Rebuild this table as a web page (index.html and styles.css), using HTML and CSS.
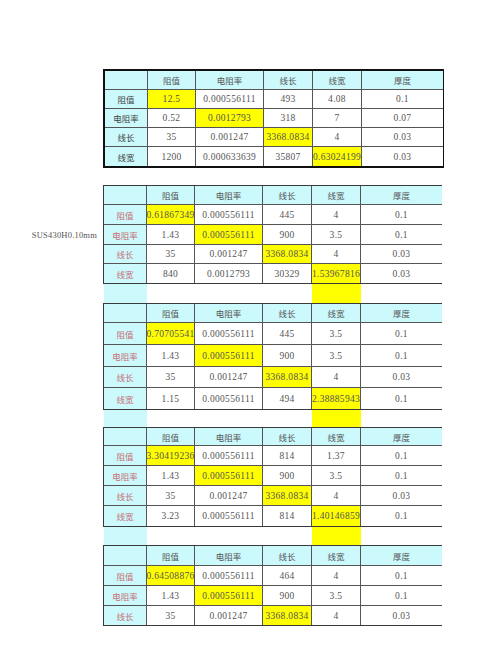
FILE: index.html
```html
<!DOCTYPE html>
<html>
<head>
<meta charset="utf-8">
<link rel="stylesheet" href="styles.css">
</head>
<body>
<div class="page">

  <section class="block b1">
    <div class="side"></div>
    <div class="stack">
      <div class="sheet thick">
        <div class="c hd"></div><div class="c hd">阻值</div><div class="c hd">电阻率</div><div class="c hd">线长</div><div class="c hd">线宽</div><div class="c hd">厚度</div>
        <div class="c hd rl">阻值</div><div class="c y">12.5</div><div class="c">0.000556111</div><div class="c">493</div><div class="c">4.08</div><div class="c">0.1</div>
        <div class="c hd rl">电阻率</div><div class="c">0.52</div><div class="c y">0.0012793</div><div class="c">318</div><div class="c">7</div><div class="c">0.07</div>
        <div class="c hd rl">线长</div><div class="c">35</div><div class="c">0.001247</div><div class="c y">3368.0834</div><div class="c">4</div><div class="c">0.03</div>
        <div class="c hd rl">线宽</div><div class="c">1200</div><div class="c">0.000633639</div><div class="c">35807</div><div class="c y">0.63024199</div><div class="c">0.03</div>
      </div>
      <div class="spacer"></div>
    </div>
  </section>

  <section class="block b2">
    <div class="side"><span class="label">SUS430H0.10mm</span></div>
    <div class="stack">
      <div class="sheet">
        <div class="c hd"></div><div class="c hd">阻值</div><div class="c hd">电阻率</div><div class="c hd">线长</div><div class="c hd">线宽</div><div class="c hd">厚度</div>
        <div class="c hd red">阻值</div><div class="c y">0.61867349</div><div class="c">0.000556111</div><div class="c">445</div><div class="c">4</div><div class="c">0.1</div>
        <div class="c hd red">电阻率</div><div class="c">1.43</div><div class="c y">0.000556111</div><div class="c">900</div><div class="c">3.5</div><div class="c">0.1</div>
        <div class="c hd red">线长</div><div class="c">35</div><div class="c">0.001247</div><div class="c y">3368.0834</div><div class="c">4</div><div class="c">0.03</div>
        <div class="c hd red">线宽</div><div class="c">840</div><div class="c">0.0012793</div><div class="c">30329</div><div class="c y">1.53967816</div><div class="c">0.03</div>
      </div>
      <div class="gap"><div class="gc"></div><div></div><div></div><div></div><div class="gy"></div><div></div></div>
    </div>
  </section>

  <section class="block b3">
    <div class="side"></div>
    <div class="stack">
      <div class="sheet">
        <div class="c hd"></div><div class="c hd">阻值</div><div class="c hd">电阻率</div><div class="c hd">线长</div><div class="c hd">线宽</div><div class="c hd">厚度</div>
        <div class="c hd red">阻值</div><div class="c y">0.70705541</div><div class="c">0.000556111</div><div class="c">445</div><div class="c">3.5</div><div class="c">0.1</div>
        <div class="c hd red">电阻率</div><div class="c">1.43</div><div class="c y">0.000556111</div><div class="c">900</div><div class="c">3.5</div><div class="c">0.1</div>
        <div class="c hd red">线长</div><div class="c">35</div><div class="c">0.001247</div><div class="c y">3368.0834</div><div class="c">4</div><div class="c">0.03</div>
        <div class="c hd red">线宽</div><div class="c">1.15</div><div class="c">0.000556111</div><div class="c">494</div><div class="c y">2.38885943</div><div class="c">0.1</div>
      </div>
      <div class="gap g3"><div class="gc"></div><div></div><div></div><div></div><div class="gy"></div><div></div></div>
    </div>
  </section>

  <section class="block b4">
    <div class="side"></div>
    <div class="stack">
      <div class="sheet">
        <div class="c hd"></div><div class="c hd">阻值</div><div class="c hd">电阻率</div><div class="c hd">线长</div><div class="c hd">线宽</div><div class="c hd">厚度</div>
        <div class="c hd red">阻值</div><div class="c y">3.30419236</div><div class="c">0.000556111</div><div class="c">814</div><div class="c">1.37</div><div class="c">0.1</div>
        <div class="c hd red">电阻率</div><div class="c">1.43</div><div class="c y">0.000556111</div><div class="c">900</div><div class="c">3.5</div><div class="c">0.1</div>
        <div class="c hd red">线长</div><div class="c">35</div><div class="c">0.001247</div><div class="c y">3368.0834</div><div class="c">4</div><div class="c">0.03</div>
        <div class="c hd red">线宽</div><div class="c">3.23</div><div class="c">0.000556111</div><div class="c">814</div><div class="c y">1.40146859</div><div class="c">0.1</div>
      </div>
      <div class="gap g4"><div class="gc"></div><div></div><div></div><div></div><div class="gy"></div><div></div></div>
    </div>
  </section>

  <section class="block b5">
    <div class="side"></div>
    <div class="stack">
      <div class="sheet">
        <div class="c hd"></div><div class="c hd">阻值</div><div class="c hd">电阻率</div><div class="c hd">线长</div><div class="c hd">线宽</div><div class="c hd">厚度</div>
        <div class="c hd red">阻值</div><div class="c y">0.64508876</div><div class="c">0.000556111</div><div class="c">464</div><div class="c">4</div><div class="c">0.1</div>
        <div class="c hd red">电阻率</div><div class="c">1.43</div><div class="c y">0.000556111</div><div class="c">900</div><div class="c">3.5</div><div class="c">0.1</div>
        <div class="c hd red">线长</div><div class="c">35</div><div class="c">0.001247</div><div class="c y">3368.0834</div><div class="c">4</div><div class="c">0.03</div>
      </div>
    </div>
  </section>

</div>
</body>
</html>
```

FILE: styles.css
```css
* { box-sizing: border-box; }
html, body { margin: 0; padding: 0; background: #fff; }
body {
  font-family: "Liberation Serif", "Noto Sans CJK SC", serif;
  color: #555;
  font-size: 9.5px;
  width: 480px;
  height: 647px;
  overflow: hidden;
}
.page {
  padding-top: 69px;
  display: flex;
  flex-direction: column;
}
.block {
  display: flex;
}
.side {
  width: 103px;
  flex: none;
  display: flex;
  align-items: flex-start;
  justify-content: flex-end;
}
.label {
  margin-top: 45px;
  margin-right: 6px;
  font-size: 8.5px;
  color: #555;
  letter-spacing: 0.2px;
}
.stack {
  display: flex;
  flex-direction: column;
}
.sheet {
  display: grid;
  grid-template-columns: 43px 48px 68px 49px 49px 81px;
  border: 1px solid #3a3a3a;
  width: 339px;
}
.sheet.thick {
  border: 2px solid #111;
  width: 341px;
}
.c {
  display: flex;
  align-items: center;
  justify-content: center;
  overflow: hidden;
  white-space: nowrap;
  border-right: 1px solid #555;
  border-bottom: 1px solid #555;
  background: #fff;
  letter-spacing: 0.3px;
}
.c:nth-child(6n) { border-right: none; }
.c:nth-last-child(-n+6) { border-bottom: none; }
.hd {
  background: #ccf9fb;
  font-family: "Noto Sans CJK SC", sans-serif;
  font-size: 8.5px;
  color: #555;
  letter-spacing: 0;
}
.rl { color: #444; }
.red { color: #c8707a; }
.y { background: #ffff00; }

.b1 .sheet { grid-template-rows: 19px 19px 19px 19px 19px; }
.spacer { height: 17px; }

.b2 .sheet { grid-template-rows: 19px 20px 20px 19px 19px; }
.b3 .sheet { grid-template-rows: 19px 22px 22px 21px 21px; }
.b4 .sheet { grid-template-rows: 18px 20px 20px 20px 20px; }
.b5 .sheet { grid-template-rows: 20px 20px 20px 19px; }

.gap {
  display: grid;
  grid-template-columns: 43px 48px 68px 49px 49px 81px;
  height: 19px;
  padding-left: 1px;
}
.gap.g3 { height: 17px; }
.gap.g4 { height: 18px; }
.gc { background: #ccf9fb; }
.gy { background: #ffff00; }
```
